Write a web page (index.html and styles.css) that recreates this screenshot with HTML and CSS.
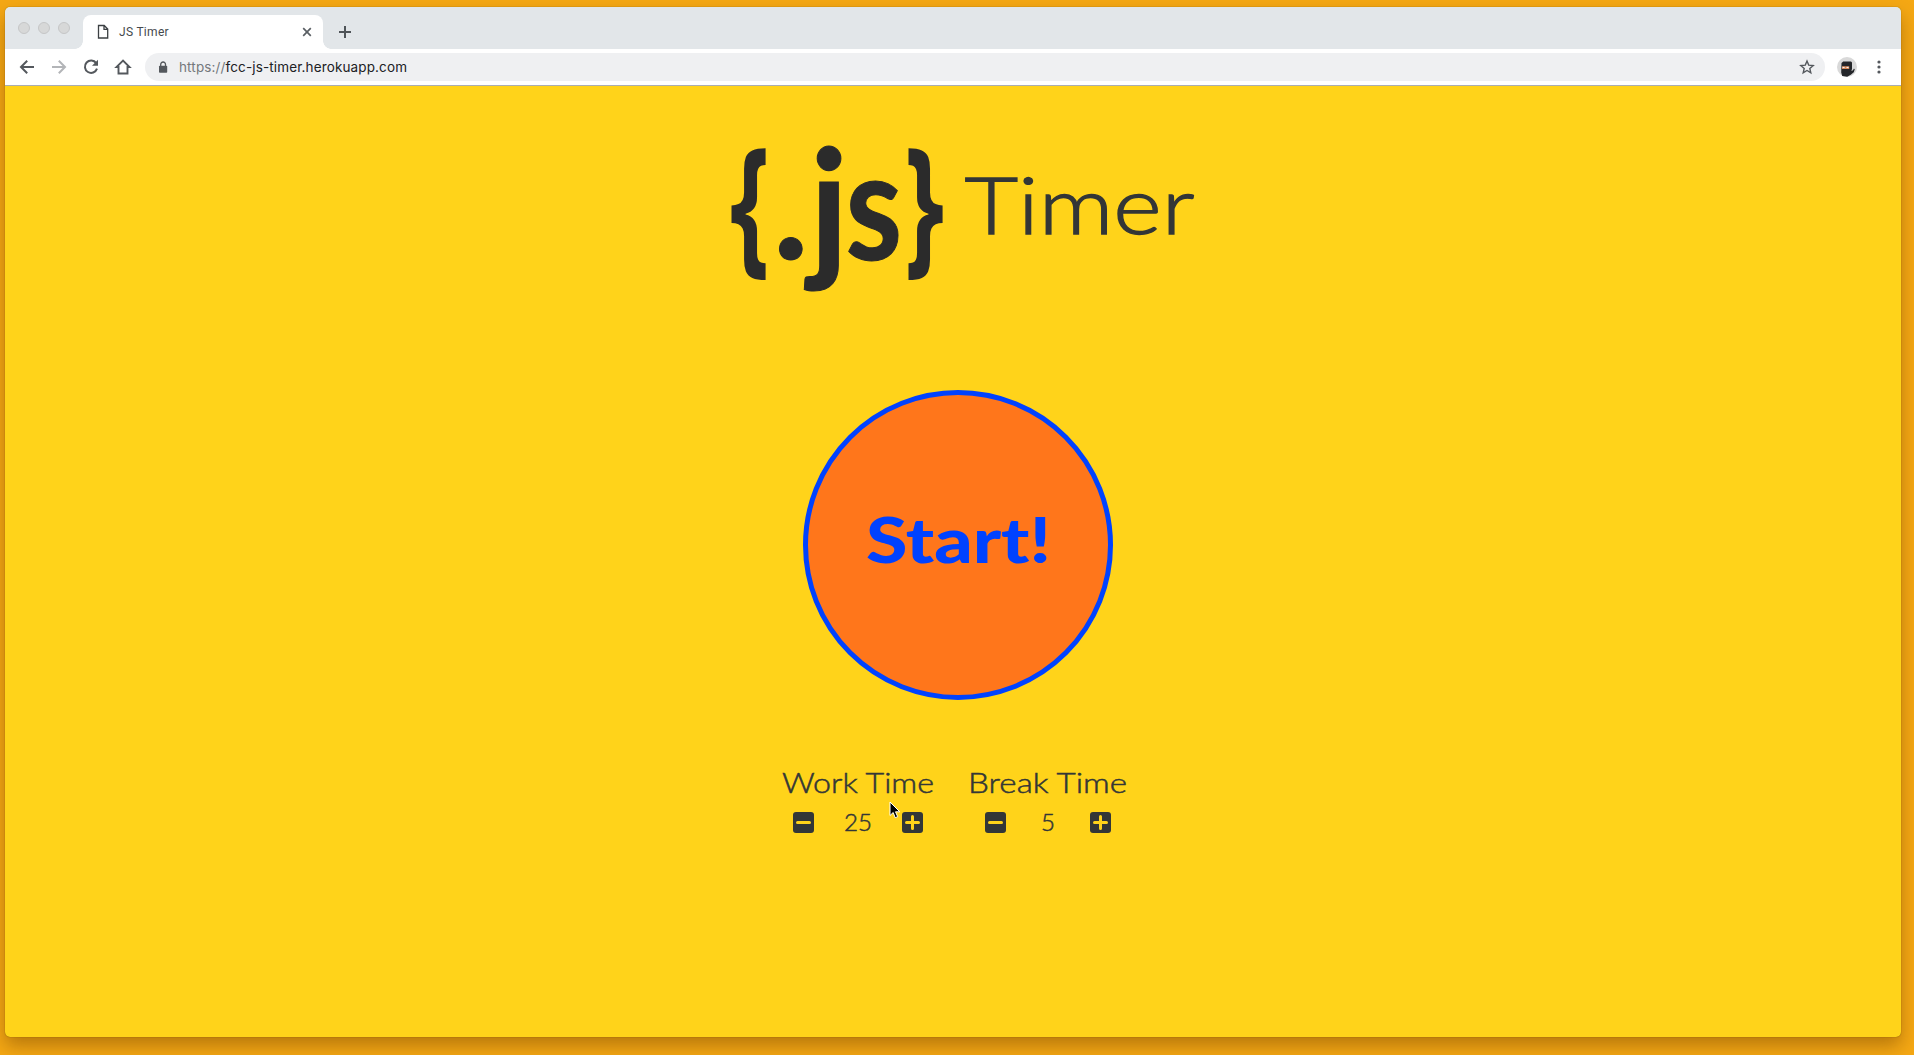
FILE: index.html
```html
<!DOCTYPE html>
<html lang="en">
<head>
<meta charset="utf-8">
<title>JS Timer</title>
<link rel="stylesheet" href="styles.css">
</head>
<body>
<div class="window">
  <header class="tabstrip">
    <div class="lights"><i></i><i></i><i></i></div>
    <div class="tab">
      <svg class="doc" width="12" height="16" viewBox="0 0 12 16"><path d="M1.5 1.5h5.7l3.5 3.6v8.9H1.5zM7 1.5v3.8h3.7" fill="none" stroke="#3c4043" stroke-width="1.3"/></svg>
      <span class="tab-title">JS Timer</span>
      <svg class="close" width="10" height="10" viewBox="0 0 10 10"><path d="M1.2 1.2l7.6 7.6M8.8 1.2L1.2 8.8" stroke="#5a5f64" stroke-width="1.7"/></svg>
    </div>
    <svg class="newtab" width="14" height="14" viewBox="0 0 14 14"><path d="M7 1v12M1 7h12" stroke="#4f5458" stroke-width="2"/></svg>
  </header>
  <nav class="toolbar">
    <svg width="16" height="16" viewBox="0 0 16 16"><path d="M15 8H2.5M8.2 1.8L2 8l6.2 6.2" fill="none" stroke="#54585d" stroke-width="2"/></svg>
    <svg width="16" height="16" viewBox="0 0 16 16"><path d="M1 8h12.5M7.8 1.8L14 8l-6.2 6.2" fill="none" stroke="#b3b5b8" stroke-width="2"/></svg>
    <svg width="16" height="16" viewBox="0 0 16 16"><path d="M13.2 4.1A6.2 6.2 0 1 0 14 9.7" fill="none" stroke="#54585d" stroke-width="2"/><path d="M15 .8v6H9z" fill="#54585d"/></svg>
    <svg width="16" height="16" viewBox="0 0 16 16"><path d="M8 1.6L1.5 8h2v6.5h9V8h2z" fill="none" stroke="#54585d" stroke-width="1.9"/></svg>
    <div class="address">
      <svg class="lock" width="10" height="13" viewBox="0 0 10 13"><rect x="1" y="4.8" width="8.2" height="7" rx=".8" fill="#54585d"/><path d="M2.7 5V3.4a2.4 2.4 0 0 1 4.8 0V5" fill="none" stroke="#54585d" stroke-width="1.3"/></svg>
      <span class="url"><span class="scheme">https://</span>fcc-js-timer.herokuapp.com</span>
      <svg class="star" width="16" height="16" viewBox="0 0 16 16"><path d="M8 2l1.7 4.1 4.5.4-3.4 2.9 1 4.4L8 11.5l-3.8 2.3 1-4.4-3.4-2.9 4.5-.4z" fill="none" stroke="#54585d" stroke-width="1.4"/></svg>
    </div>
    <svg class="avatar" width="20" height="20" viewBox="0 0 20 20"><circle cx="10" cy="10" r="10" fill="#d9d9d9"/><path d="M4.5 6l1.7-1.4H14l1 1V12l-.6 2 1.6-.8.8-1.5 1 .4-1 3.2-3 2.4-3.6 2-5-.7-1-3.5z" fill="#24262a"/><path d="M5 9.2h7.2v2.7H5z" fill="#d98a5b"/><path d="M5.6 10.4h2M9.5 10.4h2" stroke="#fff"/></svg>
    <svg class="menu" width="4" height="14" viewBox="0 0 4 14" fill="#54585d"><circle cx="2" cy="2" r="1.6"/><circle cx="2" cy="7" r="1.6"/><circle cx="2" cy="12" r="1.6"/></svg>
  </nav>
  <main class="page">
    <div class="title">
      <svg class="logo" width="220" height="160" viewBox="0 0 220 160">
        <text class="brace" transform="translate(12 116) scale(.67 1)">{</text>
        <text class="letters" transform="translate(55 119)">.</text>
        <text class="letters" transform="translate(92 123) scale(1 1.05)">j</text>
        <text class="letters" transform="translate(127.5 119.5) scale(.86 1.01)">s</text>
        <text class="brace" transform="translate(186.5 116) scale(.67 1)">}</text>
      </svg>
      <svg class="timer" width="260" height="160" viewBox="0 0 260 160"><text x="26.5" y="93.5" textLength="230" lengthAdjust="spacingAndGlyphs">Timer</text></svg>
    </div>
    <button class="start">
      <svg width="190" height="70" viewBox="0 0 190 70"><text class="start-text" x="3" y="56" textLength="185" lengthAdjust="spacingAndGlyphs">Start!</text></svg>
    </button>
    <section class="settings">
      <div class="setting work">
        <svg class="label" width="154" height="30"><text x="1" y="25.5" textLength="152" lengthAdjust="spacingAndGlyphs">Work Time</text></svg>
        <div class="stepper">
          <svg class="step" width="21" height="21"><rect width="21" height="21" rx="3"/><path d="M4.5 10.5h12"/></svg>
          <svg class="value" width="30" height="24"><text x="1" y="21" textLength="28" lengthAdjust="spacingAndGlyphs">25</text></svg>
          <svg class="step" width="21" height="21"><rect width="21" height="21" rx="3"/><path d="M4.5 10.5h12M10.5 4.5v12"/></svg>
        </div>
      </div>
      <div class="setting break">
        <svg class="label" width="160" height="30"><text x="0" y="25.5" textLength="159" lengthAdjust="spacingAndGlyphs">Break Time</text></svg>
        <div class="stepper">
          <svg class="step" width="21" height="21"><rect width="21" height="21" rx="3"/><path d="M4.5 10.5h12"/></svg>
          <svg class="value" width="16" height="24"><text x="1" y="21" textLength="14" lengthAdjust="spacingAndGlyphs">5</text></svg>
          <svg class="step" width="21" height="21"><rect width="21" height="21" rx="3"/><path d="M4.5 10.5h12M10.5 4.5v12"/></svg>
        </div>
      </div>
    </section>
  </main>
</div>
<svg class="cursor" width="13" height="19" viewBox="0 0 13 19"><path d="M1 1v13.5l3.2-3 2 5.2 2.5-1-2.2-4.9h4.3z" fill="#000" stroke="#fff" stroke-width="1"/></svg>
</body>
</html>
```
FILE: styles.css
```css
* { box-sizing: border-box; }
html, body { height: 100%; }
body {
  margin: 0;
  padding: 7px 13px 18px 5px;
  background: #f5a814;
  overflow: hidden;
  font-family: Inter, "Liberation Sans", sans-serif;
}
svg { display: block; flex: none; overflow: visible; }
.window {
  display: flex;
  flex-direction: column;
  height: 1030px;
  border-radius: 5px;
  overflow: hidden;
  background: #ffd31a;
  box-shadow: 0 0 1px rgba(70, 40, 0, .8), 0 9px 18px rgba(110, 65, 0, .45);
}
.tabstrip {
  display: flex;
  flex: none;
  height: 42px;
  padding-left: 13px;
  background: #e2e6e9;
}
.lights { display: flex; gap: 8px; width: 65px; padding-top: 15px; }
.lights i { width: 12px; height: 12px; border: 1px solid #c5c6c7; border-radius: 50%; background: #d7d8d8; }
.tab {
  position: relative;
  display: flex;
  align-items: center;
  width: 240px;
  height: 34px;
  margin-top: 8px;
  padding: 0 11px 0 14px;
  border-radius: 8px 8px 0 0;
  background: #fff;
}
.tab::before, .tab::after {
  content: "";
  position: absolute;
  bottom: 0;
  width: 8px;
  height: 8px;
}
.tab::before { left: -8px; background: radial-gradient(circle at 0 0, transparent 7.5px, #fff 8px); }
.tab::after { right: -8px; background: radial-gradient(circle at 100% 0, transparent 7.5px, #fff 8px); }
.tab-title { flex: 1; margin-left: 10px; font: 12px Roboto, sans-serif; letter-spacing: .3px; color: #45494d; }
.newtab { margin: 18px 0 0 15px; }
.toolbar {
  display: flex;
  align-items: center;
  flex: none;
  gap: 16px;
  height: 37px;
  padding: 0 20px 0 14px;
  border-bottom: 1px solid #a9adb2;
  background: #fff;
}
.address {
  display: flex;
  align-items: center;
  flex: 1;
  height: 28px;
  margin: 0 -4px 0 -2px;
  padding: 0 10px 0 13px;
  border-radius: 14px;
  background: #eff0f2;
}
.url { flex: 1; margin-left: 11px; font-size: 13.5px; letter-spacing: .13px; color: #202124; }
.scheme { color: #74787c; }
.avatar { margin-right: 4px; }
.page { display: flex; flex-direction: column; align-items: center; flex: 1; padding: 54px 0 0 10px; }
.title { display: flex; }
.logo { fill: #2b2b2b; }
.brace { font: 700 150px "Open Sans", sans-serif; }
.letters { font: 700 150px Lato, sans-serif; stroke: #2b2b2b; stroke-width: 1; }
.timer { font: 300 78px Lato, sans-serif; fill: #333637; stroke: #333637; stroke-width: 1.3; }
.start {
  display: flex;
  align-items: center;
  justify-content: center;
  width: 310px;
  height: 310px;
  margin-top: 90px;
  padding: 0 0 7px;
  border: 5px solid #0042ff;
  border-radius: 50%;
  background: #ff761b;
}
.start-text { fill: #0042ff; font: 900 63px Lato, sans-serif; }
.settings { display: flex; gap: 33px; margin: 67px 7px 0 0; }
.setting { display: flex; flex-direction: column; align-items: center; gap: 13px; fill: #333637; }
.label { font: 300 28px Lato, sans-serif; stroke: #333637; stroke-width: .5; }
.stepper { display: flex; align-items: center; justify-content: space-between; width: 130px; height: 24px; }
.break .stepper { width: 126px; }
.value { font: 300 24px Lato, sans-serif; stroke: #333637; stroke-width: .5; }
.step path { fill: none; stroke: #ffd31a; stroke-width: 3; stroke-linecap: round; }
.cursor { position: absolute; left: 889px; top: 801px; }
```
